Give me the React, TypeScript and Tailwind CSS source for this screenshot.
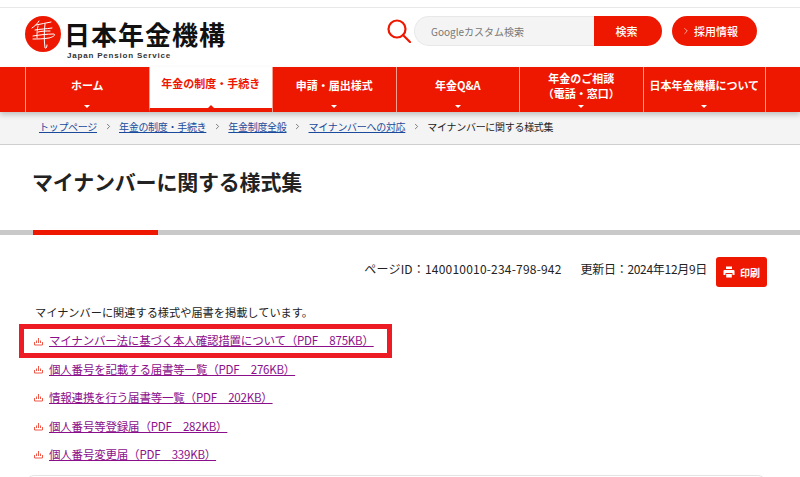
import React from 'react';
import { ChevronRight } from 'lucide-react';

const navItems = [
  { label: ['ホーム'] },
  { label: ['年金の制度・手続き'], active: true },
  { label: ['申請・届出様式'] },
  { label: ['年金Q&A'] },
  { label: ['年金のご相談', '（電話・窓口）'] },
  { label: ['日本年金機構について'] },
];

const crumbs = ['トップページ', '年金の制度・手続き', '年金制度全般', 'マイナンバーへの対応'];

const links = [
  'マイナンバー法に基づく本人確認措置について（PDF　875KB）',
  '個人番号を記載する届書等一覧（PDF　276KB）',
  '情報連携を行う届書等一覧（PDF　202KB）',
  '個人番号等登録届（PDF　282KB）',
  '個人番号変更届（PDF　339KB）',
];

const PdfIcon = () => (
  <svg className="w-[9px] h-[9px] shrink-0" viewBox="0 0 9 9" fill="none" stroke="#ee5a4a" strokeWidth="1">
    <path d="M0.5 5v3h8V5M4.5 1v5M2.5 3.5v2.500M6.500 3.500v2.500" />
  </svg>
);

const Logo = () => (
  <svg className="w-9 h-9 shrink-0" viewBox="0 0 36 36">
    <circle cx="18" cy="18" r="18" fill="#ee1800" />
    <g fill="none" stroke="#fff" strokeWidth="1" strokeLinecap="round">
      <path d="M14 5c-2 3-4 5-7 7M11 9c5-1 10-2 15-3M10 14c5-1 11-1 17-2M8 20c6-1 14-2 21-2c2 1-1 3-5 4c-6 1-12 1-16 1" />
      <path d="M13 10c-1 4-1 7-1 12M20 8c-1 8-1 16 0 24c1 1 2-1 2-3M13 16c4-1 8-1 12-1" />
    </g>
  </svg>
);

const App = () => {
  return (
    <div className="w-[800px] h-[477px] overflow-hidden bg-white text-[#222] text-[12px] font-['Noto_Sans_CJK_JP','Noto_Sans',sans-serif]">
      <header className="h-[60px] mt-[7px] border-t border-[#e8e8e8] pl-[25px] pr-[43px] flex justify-between">
        <div className="pt-2">
          <div className="flex items-center gap-[3px] h-9">
            <Logo />
            <span className="text-[26px] leading-none font-bold tracking-[1px] text-[#111]">日本年金機構</span>
          </div>
          <div className="ml-[42px] -mt-px text-[8px] leading-[10px] font-bold tracking-[0.8px] text-[#333] font-['Liberation_Sans',sans-serif]">Japan Pension Service</div>
        </div>
        <div className="flex items-start gap-[10px] pt-2">
          <div className="flex items-start gap-[3px]">
            <svg className="w-6 h-6 mt-[3px]" viewBox="0 0 24 24" fill="none" stroke="#ee1800" strokeWidth="2.2" strokeLinecap="round">
              <circle cx="10" cy="10" r="8.500" />
              <path d="M16 16l7 7" />
            </svg>
            <div className="flex w-[248px] h-[30px]">
              <div className="w-[180px] rounded-l-full bg-[#f4f4f4] border border-[#e8e8e8] border-r-0 pl-4 flex items-center text-[10px] text-[#777]">Googleカスタム検索</div>
              <div className="flex-1 rounded-r-full bg-[#ee1800] text-white flex items-center justify-center text-[11px] font-medium pr-[3px]">検索</div>
            </div>
          </div>
          <div className="w-[85px] h-[30px] rounded-full bg-[#ee1800] text-white flex items-center pl-[9px] gap-[3px] text-[11px] font-medium">
            <ChevronRight size={10} strokeWidth={1.5} />
            採用情報
          </div>
        </div>
      </header>

      <nav className="relative z-10 h-[45px] bg-[#ee1800] pl-[25px] flex shadow-[0_3px_5px_rgba(0,0,0,0.2)]">
        {navItems.map((item, i) => (
          <div
            key={i}
            className={
              'w-[123.500px] h-full border-l border-[#f8a090] last:border-r flex flex-col items-center justify-center relative text-[11px] leading-[15px] font-bold pb-[8px] ' +
              (item.active ? 'bg-white text-[#ee1800] border-b-[4px] border-b-[#ee1800]' : 'text-white')
            }
          >
            {item.label.map((line) => (
              <span key={line} className="whitespace-nowrap">{line}</span>
            ))}
            <span
              className={
                'absolute left-1/2 -translate-x-1/2 w-0 h-0 border-x-[3px] border-x-transparent ' +
                (item.active
                  ? 'bottom-0 border-b-[3px] border-b-[#ee1800]'
                  : 'bottom-[4px] border-t-[3px] border-t-white')
              }
            />
          </div>
        ))}
      </nav>

      <div className="h-[33px] bg-[#f4f4f4] border-b border-[#cfcfcf] pl-[39px] pb-[3px] flex items-center text-[10px] tracking-[-0.3px]">
        {crumbs.map((c) => (
          <React.Fragment key={c}>
            <span className="text-[#1a4a9c] underline">{c}</span>
            <ChevronRight size={9} className="mx-[6.500px] text-[#555]" />
          </React.Fragment>
        ))}
        <span className="text-[#222]">マイナンバーに関する様式集</span>
      </div>

      <h1 className="h-[85px] pl-[32px] pt-[21px] text-[21px] leading-[30px] font-bold tracking-[-0.2px] text-[#222]">マイナンバーに関する様式集</h1>

      <div className="h-[5px] bg-[#c9c9c9]">
        <div className="ml-[33px] w-[125px] h-full bg-[#ee1800]" />
      </div>

      <div className="h-[52px] pr-[33px] pt-[22px] flex items-start justify-end">
        <span className="mt-[3px] text-[12px] leading-[18px] tracking-[0.2px]">ページID：140010010-234-798-942</span>
        <span className="ml-[19px] mt-[3px] text-[12px] leading-[18px] tracking-[-0.3px]">更新日：2024年12月9日</span>
        <div className="ml-[9px] w-[51px] h-[30px] rounded-[3px] bg-[#ee1800] text-white flex items-center justify-center gap-[5px] text-[10px] font-bold">
          <svg className="w-3 h-3" viewBox="0 0 12 12" fill="#fff">
            <path d="M3 0.500h6v2.500H3zM1.500 4h9a1 1 0 0 1 1 1v4H9.500V7h-7v2H.5V5a1 1 0 0 1 1-1zM3.200 8h5.600v3.500H3.200z" />
          </svg>
          印刷
        </div>
      </div>

      <p className="pl-[35px] mt-[16px] text-[11.200px] leading-[18px]">マイナンバーに関連する様式や届書を掲載しています。</p>

      <ul className="mt-[3px] ml-[19px]">
        {links.map((link, i) => (
          <li
            key={link}
            className={
              'flex items-center gap-[6px] ' +
              (i === 0 ? 'w-[373px] h-[34px] mb-[-3px] border-[5px] border-[#ed1c24] pl-[10px]' : 'h-[28.500px] pl-[15px]')
            }
          >
            <PdfIcon />
            <a className="text-[#8b0f8b] underline whitespace-nowrap text-[11.500px] tracking-[-0.2px]">{link}</a>
          </li>
        ))}
      </ul>
      <div className="mt-[6px] ml-[26px] w-[740px] h-4 border border-[#e4e4e4] rounded-lg" />
    </div>
  );
};

export default App;
